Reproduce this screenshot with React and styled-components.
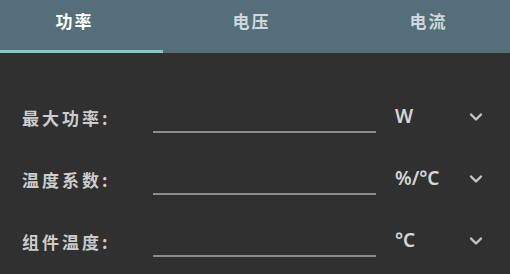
import React, { useState } from "react";
import styled, { createGlobalStyle } from "styled-components";

const GlobalStyle = createGlobalStyle`
  html, body {
    margin: 0;
    padding: 0;
    background: #303030;
  }
  body {
    font-family: "Noto Sans", "Noto Sans CJK SC", sans-serif;
  }
`;

const Page = styled.div`
  width: 510px;
  height: 274px;
  background: #303030;
  overflow: hidden;
`;

const TabBar = styled.div`
  height: 53px;
  background: #546e7a;
  overflow: hidden;
`;

const TabTrack = styled.div`
  display: flex;
  margin-left: -14px;
  height: 100%;
`;

const Tab = styled.div`
  flex: 0 0 177px;
  display: flex;
  align-items: center;
  justify-content: center;
  padding-bottom: 9px;
  box-sizing: border-box;
  font-family: "Noto Sans CJK SC", sans-serif;
  font-weight: 700;
  font-size: 17px;
  letter-spacing: 2px;
  color: ${(p) => (p.$active ? "#ffffff" : "#cfd8dc")};
  border-bottom: 3px solid ${(p) => (p.$active ? "#80cbc4" : "transparent")};
  cursor: pointer;
`;

const Form = styled.div`
  padding-top: 33px;
`;

const Row = styled.div`
  display: grid;
  grid-template-columns: 131px 223px 1fr auto;
  align-items: center;
  height: 62px;
  padding: 0 27px 0 22px;
`;

const Label = styled.span`
  font-family: "Noto Sans CJK SC", sans-serif;
  font-weight: 700;
  font-size: 17px;
  letter-spacing: 3px;
  color: #cccccc;
`;

const Field = styled.input`
  height: 30px;
  box-sizing: border-box;
  background: transparent;
  border: none;
  border-bottom: 2px solid #8c8c8c;
  outline: none;
  color: #eee;
  font-size: 16px;
  padding: 0;
  margin-top: 2px;
`;

const Unit = styled.span`
  padding-left: 19px;
  padding-bottom: 3px;
  font-family: "Noto Sans", sans-serif;
  font-weight: 600;
  font-size: 19px;
  color: #d6d6d6;
`;

const Chevron = styled.svg`
  width: 14px;
  height: 10px;
  stroke: #c4c4c4;
  stroke-width: 2.4;
  fill: none;
  stroke-linecap: round;
  stroke-linejoin: round;
`;

const tabs = ["功率", "电压", "电流"];

const fields = [
  { label: "最大功率:", unit: "W" },
  { label: "温度系数:", unit: "%/°C" },
  { label: "组件温度:", unit: "°C" },
];

export default function App() {
  const [active, setActive] = useState(0);
  return (
    <Page>
      <GlobalStyle />
      <TabBar>
        <TabTrack>
          {tabs.map((t, i) => (
            <Tab key={t} $active={i === active} onClick={() => setActive(i)}>
              {t}
            </Tab>
          ))}
        </TabTrack>
      </TabBar>
      <Form>
        {fields.map((f) => (
          <Row key={f.label}>
            <Label>{f.label}</Label>
            <Field type="text" />
            <Unit>{f.unit}</Unit>
            <Chevron viewBox="0 0 14 10">
              <path d="M2 2.5 L7 7.5 L12 2.5" />
            </Chevron>
          </Row>
        ))}
      </Form>
    </Page>
  );
}
